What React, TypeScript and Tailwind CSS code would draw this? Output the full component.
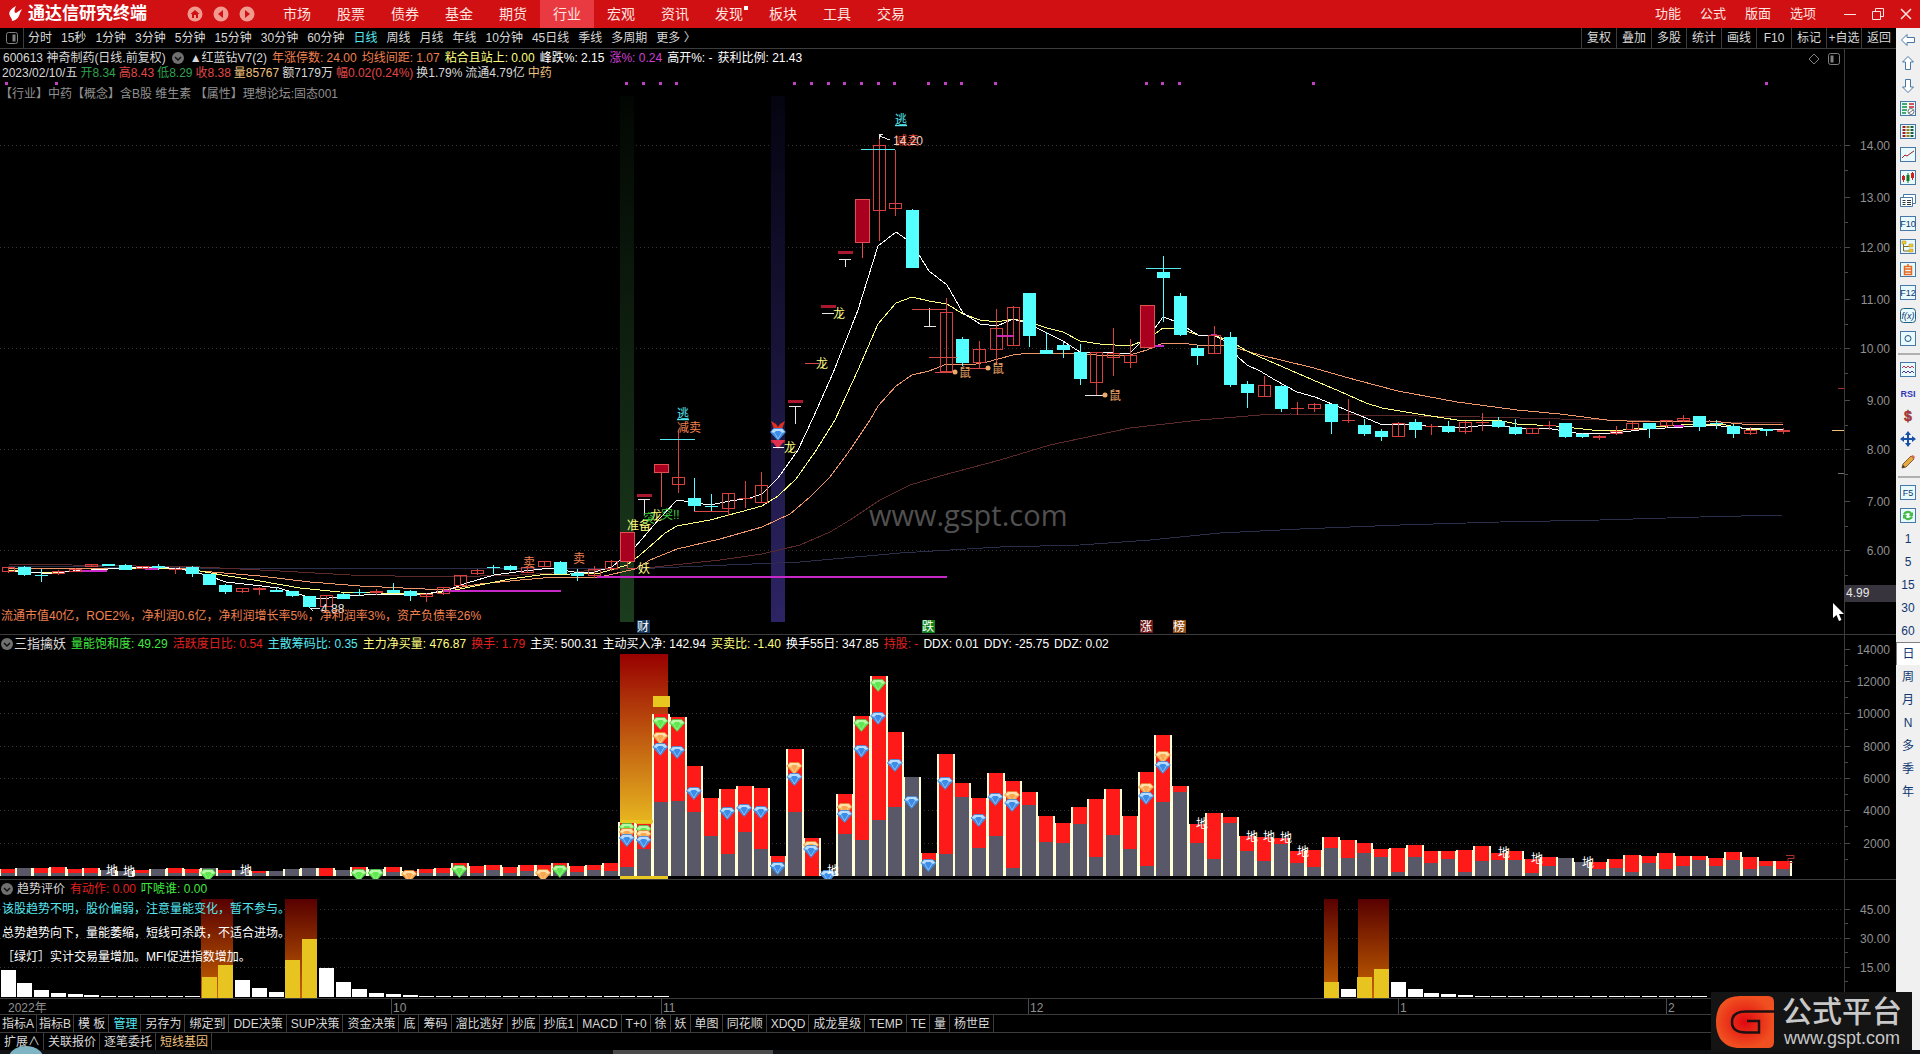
import { useState } from "react";
import type { ReactNode } from "react";

type Kind = "up" | "down" | "limit";
type Candle = [kind: Kind, top: number, bottom: number, high: number, low: number];
type Field = [text: string, color: string];
type GemColor = "g" | "o" | "b";

const STEP = 16.75;
const barX = (i: number) => 7.6 + STEP * i;

const menus = ["市场", "股票", "债券", "基金", "期货", "行业", "宏观", "资讯", "发现", "板块", "工具", "交易"];
const rightMenus = ["功能", "公式", "版面", "选项"];
const periods = ["分时", "15秒", "1分钟", "3分钟", "5分钟", "15分钟", "30分钟", "60分钟", "日线", "周线", "月线", "年线", "10分钟", "45日线", "季线", "多周期", "更多 〉"];
const actions = ["复权", "叠加", "多股", "统计", "画线", "F10", "标记", "+自选", "返回"];
const indicatorTabs = ["指标A", "指标B", "模 板", "管理", "另存为", "绑定到", "DDE决策", "SUP决策", "资金决策", "底", "筹码", "溜比逃好", "抄底", "抄底1", "MACD", "T+0", "徐", "妖", "单图", "同花顺", "XDQD", "成龙星级", "TEMP", "TE", "量", "杨世臣"];
const extraTabs = ["扩展∧", "关联报价", "逐笔委托", "短线基因"];

const priceFields: Field[] = [
  ["年涨停数: 24.00", "text-[#f08050]"],
  ["均线间距: 1.07", "text-[#f08050]"],
  ["粘合且站上: 0.00", "text-[#ffff80]"],
  ["峰跌%: 2.15", "text-white"],
  ["涨%: 0.24", "text-[#d040d0]"],
  ["高开%: -", "text-white"],
  ["获利比例: 21.43", "text-white"],
];

const quoteFields: Field[] = [
  ["2023/02/10/五", "text-[#d8d8d8]"],
  ["开8.34", "text-[#30a050]"],
  ["高8.43", "text-[#e04848]"],
  ["低8.29", "text-[#30a050]"],
  ["收8.38", "text-[#e04848]"],
  ["量85767", "text-[#f0c080]"],
  ["额7179万", "text-[#d8d8d8]"],
  ["幅0.02(0.24%)", "text-[#e04848]"],
  ["换1.79%", "text-[#d8d8d8]"],
  ["流通4.79亿", "text-[#d8d8d8]"],
  ["中药", "text-[#f0c080]"],
];

const volumeFields: Field[] = [
  ["量能饱和度: 49.29", "text-[#40e840]"],
  ["活跃度日比: 0.54", "text-[#e02020]"],
  ["主散筹码比: 0.35", "text-[#54e8f0]"],
  ["主力净买量: 476.87", "text-[#ffff80]"],
  ["换手: 1.79", "text-[#e02020]"],
  ["主买: 500.31", "text-white"],
  ["主动买入净: 142.94", "text-white"],
  ["买卖比: -1.40", "text-[#ffff80]"],
  ["换手55日: 347.85", "text-white"],
  ["持股: -", "text-[#e02020]"],
  ["DDX: 0.01", "text-white"],
  ["DDY: -25.75", "text-white"],
  ["DDZ: 0.02", "text-white"],
];

const trendFields: Field[] = [
  ["有动作: 0.00", "text-[#e02020]"],
  ["吓唬谁: 0.00", "text-[#40e840]"],
];

// kind, body top, body bottom, high, low
const candles: (Candle | null)[] = [
  ["up", 567, 572, 567, 573], ["down", 567, 575, 566, 576], ["down", 575, 576, 569, 582], ["up", 571, 574, 570, 575],
  ["up", 569, 572, 568, 572], ["up", 564, 567, 564, 567], ["down", 564, 566, 564, 566], ["down", 565, 570, 564, 570],
  ["up", 566, 569, 566, 569], ["down", 566, 568, 564, 570], ["up", 569, 570, 568, 574], ["down", 567, 574, 566, 577],
  ["down", 574, 585, 574, 585], ["down", 585, 592, 584, 594], ["up", 588, 592, 588, 593], ["up", 588, 590, 587, 595],
  ["down", 590, 592, 587, 592], ["down", 591, 596, 591, 597], ["down", 596, 607, 596, 608], ["up", 595, 607, 595, 607],
  ["down", 594, 599, 593, 599], ["down", 592, 592, 589, 596], ["up", 591, 593, 589, 595], ["down", 590, 593, 583, 593],
  ["down", 591, 596, 590, 601], ["up", 594, 597, 593, 602], ["up", 587, 594, 587, 595], ["up", 575, 586, 575, 586],
  ["up", 570, 574, 569, 575], ["down", 567, 568, 565, 574], ["down", 566, 570, 565, 571], ["up", 567, 573, 567, 573],
  ["up", 561, 567, 561, 567], ["down", 562, 574, 561, 574], ["down", 573, 576, 569, 581], ["up", 569, 576, 566, 578],
  ["up", 561, 569, 560, 571], ["limit", 532, 562, 532, 568], null, ["limit", 464, 473, 464, 507],
  ["up", 477, 485, 432, 493], ["down", 498, 506, 478, 511], ["down", 506, 507, 494, 511], ["up", 493, 509, 493, 516],
  ["up", 498, 499, 481, 508], ["up", 485, 503, 472, 503], null, null, null, null, null, ["limit", 199, 243, 199, 258],
  ["up", 145, 211, 135, 241], ["up", 203, 209, 150, 216], ["down", 210, 268, 209, 268], null, ["up", 312, 372, 298, 372],
  ["down", 339, 363, 337, 366], ["up", 349, 363, 341, 368], ["up", 328, 350, 309, 365], ["up", 307, 346, 306, 346],
  ["down", 293, 336, 293, 347], ["down", 350, 354, 332, 354], ["down", 345, 350, 342, 358], ["down", 352, 379, 344, 385],
  ["up", 352, 383, 352, 395], ["up", 353, 358, 328, 376], ["up", 355, 363, 339, 368], ["limit", 305, 348, 305, 348],
  ["down", 272, 278, 256, 322], ["down", 296, 335, 293, 336], ["down", 348, 356, 345, 365], ["up", 335, 354, 326, 354],
  ["down", 337, 385, 332, 387], ["down", 384, 393, 381, 408], ["up", 385, 397, 376, 397], ["down", 386, 409, 385, 412],
  ["up", 408, 409, 402, 415], ["up", 404, 409, 403, 412], ["down", 404, 422, 404, 434], ["up", 420, 421, 399, 423],
  ["down", 425, 434, 419, 436], ["down", 431, 437, 429, 441], ["up", 423, 437, 422, 437], ["down", 422, 430, 419, 438],
  ["up", 426, 427, 424, 435], ["down", 426, 432, 421, 433], ["up", 422, 432, 421, 434], ["up", 422, 423, 413, 431],
  ["down", 421, 427, 417, 428], ["down", 427, 434, 419, 435], ["up", 428, 434, 428, 434], ["up", 425, 426, 421, 430],
  ["down", 423, 437, 423, 438], ["down", 434, 437, 433, 438], ["up", 436, 438, 435, 440], ["up", 431, 434, 426, 435],
  ["up", 423, 430, 422, 430], ["down", 423, 429, 423, 438], ["up", 420, 426, 420, 428], ["up", 418, 421, 415, 422],
  ["down", 416, 427, 416, 431], ["down", 423, 424, 420, 429], ["down", 426, 434, 424, 438], ["up", 430, 434, 427, 435],
  ["down", 429, 431, 429, 436], ["up", 430, 432, 428, 434],
];

// total bar height, height of the grey part
const volumes: [number, number][] = [
  [7, 3], [8, 8], [8, 3], [9, 3], [7, 3], [8, 3], [6, 6], [5, 5], [6, 3], [7, 7], [8, 3], [7, 3],
  [8, 8], [6, 3], [6, 6], [5, 3], [5, 5], [7, 7], [8, 8], [8, 0], [6, 6], [9, 6], [7, 7], [9, 4],
  [5, 1], [7, 3], [8, 3], [13, 8], [10, 3], [11, 6], [9, 3], [11, 5], [11, 3], [13, 6], [10, 4], [11, 6],
  [13, 5], [54, 9], [52, 27], [162, 74], [159, 75], [110, 64], [78, 40], [87, 22], [90, 44], [88, 27],
  [20, 14], [127, 64], [38, 0], [5, 5], [82, 42], [160, 36], [200, 56], [144, 69], [99, 99], [23, 16],
  [122, 22], [93, 79], [78, 28], [103, 40], [95, 8], [84, 71], [60, 34], [53, 33], [69, 52], [77, 19],
  [87, 41], [60, 27], [104, 10], [141, 74], [90, 84], [52, 33], [63, 17], [59, 53], [40, 25], [39, 15],
  [38, 32], [25, 13], [26, 9], [39, 28], [36, 18], [33, 23], [27, 19], [28, 4], [31, 19], [25, 13],
  [25, 17], [26, 4], [30, 15], [23, 16], [25, 16], [17, 3], [19, 10], [18, 18], [14, 14], [14, 7],
  [17, 8], [21, 4], [20, 13], [23, 7], [20, 10], [20, 16], [18, 10], [24, 16], [19, 7], [15, 10], [15, 7],
];

const gems: [number, GemColor, number][] = [
  [12, "g", 875], [21, "g", 875], [22, "g", 875], [24, "o", 876], [27, "g", 871], [32, "o", 875], [33, "g", 871],
  [37, "g", 829], [37, "o", 834], [37, "b", 840], [38, "g", 831], [38, "o", 836], [38, "b", 842],
  [39, "g", 723], [39, "o", 738], [39, "b", 749], [40, "g", 725], [40, "b", 752], [41, "b", 793],
  [43, "b", 813], [44, "b", 810], [45, "b", 812], [46, "b", 868], [47, "o", 768], [47, "b", 779],
  [48, "o", 847], [48, "b", 851], [49, "b", 876], [50, "o", 809], [50, "b", 816], [51, "g", 725], [51, "b", 751],
  [52, "g", 685], [52, "b", 718], [53, "b", 765], [54, "b", 802], [55, "b", 865], [56, "b", 783], [58, "b", 820],
  [59, "b", 799], [60, "o", 797], [60, "b", 805], [68, "o", 789], [68, "b", 798], [69, "o", 757], [69, "b", 767],
];

const groundMarks = [[112, 870], [129, 871], [246, 870], [833, 870], [1202, 823], [1252, 836], [1269, 836], [1286, 837], [1303, 851], [1504, 852], [1537, 858], [1588, 862]];
const purpleDots = [6, 56, 626, 643, 660, 676, 794, 811, 828, 844, 861, 878, 894, 928, 945, 961, 995, 1146, 1162, 1179, 1313, 1766];

const averages = [
  { color: "#2b2e48", points: "8,566 200,568 450,568 655,568 800,562 900,553 1000,547 1080,545 1150,540 1220,533 1300,529 1400,525 1500,522 1600,520 1700,517 1783,515" },
  { color: "#5c2a2a", points: "8,564 200,567 280,571 350,575 440,577 520,575 600,570 655,567 720,560 762,554 800,545 830,532 850,520 880,500 910,485 940,476 1000,460 1050,445 1130,428 1200,420 1260,415 1290,414 1356,415 1480,417 1560,419 1650,421 1783,423" },
  { color: "#f09868", points: "8,568 124,569 180,568 200,571 260,576 310,582 360,586 425,589 450,589 480,584 520,580 555,577 600,577 635,569 650,560 677,549 720,539 762,527 790,514 810,497 830,477 850,450 870,420 878,406 896,386 912,375 929,371 947,364 970,365 987,362 1013,355 1029,353 1063,353 1097,355 1130,355 1147,350 1163,343 1180,343 1197,345 1230,346 1260,355 1310,367 1356,380 1398,391 1457,402 1517,410 1560,414 1607,420 1647,422 1710,421 1742,424 1783,424" },
  { color: "#ffff80", points: "8,570 41,573 75,571 124,568 160,568 200,571 222,575 260,581 300,588 340,592 380,593 425,594 450,591 480,585 510,579 540,575 570,574 600,573 627,565 640,555 655,542 665,533 677,526 710,520 740,512 762,506 778,496 796,479 815,452 835,420 858,370 878,324 896,303 912,297 929,301 947,304 963,314 980,320 997,322 1013,319 1029,322 1047,328 1063,332 1080,341 1100,344 1130,346 1140,342 1155,334 1163,328 1177,328 1198,335 1213,335 1230,341 1247,351 1260,357 1290,370 1313,380 1339,391 1366,403 1382,408 1418,414 1457,420 1497,420 1517,424 1556,426 1592,430 1623,430 1655,427 1694,424 1726,425 1746,429 1783,429" },
  { color: "#ffffff", points: "8,571 24,572 41,573 57,573 73,571 92,570 124,568 158,567 180,569 191,571 209,576 226,582 253,585 279,588 295,593 312,598 329,598 346,596 383,594 425,594 448,590 467,583 494,575 524,571 551,568 574,572 594,572 612,567 635,547 660,518 677,500 710,505 730,501 750,498 762,494 778,478 798,450 813,418 833,373 858,310 878,246 896,232 906,239 919,255 929,271 947,285 963,313 980,324 997,326 1013,319 1029,324 1047,333 1063,341 1080,352 1113,353 1130,353 1138,345 1155,328 1163,317 1177,322 1190,330 1198,335 1213,335 1227,342 1238,357 1247,365 1260,371 1275,380 1297,392 1315,397 1339,407 1366,418 1380,424 1402,424 1426,426 1457,428 1489,425 1521,428 1552,429 1576,433 1600,434 1623,432 1647,429 1683,427 1710,425 1742,428 1783,430" },
];

const trendBars: [number, number, boolean?][] = [
  [0, 27], [1, 14], [2, 7], [3, 4], [4, 3], [5, 2],
  [12, 20, true], [13, 32, true], [14, 17], [15, 9], [16, 5], [17, 37, true], [18, 58, true], [19, 29], [20, 15], [21, 8], [22, 4], [23, 3], [24, 2],
  [79, 15, true], [80, 8], [81, 20, true], [82, 28, true], [83, 15], [84, 8], [85, 4], [86, 3], [87, 2],
];
const flatBars = [6, 7, 8, 9, 10, 11, ...range(25, 39), ...range(88, 101)];

function range(from: number, to: number) {
  return Array.from({ length: to - from + 1 }, (_, i) => from + i);
}

const months = [[0, "2022年"], [391, "10"], [661, "11"], [1028, "12"], [1398, "1"], [1666, "2"]] as const;

export default function App() {
  const [menu, setMenu] = useState("行业");
  const [period, setPeriod] = useState("日线");

  return (
    <div className="flex min-h-screen flex-col overflow-hidden bg-black font-['Liberation_Sans','Noto_Sans_CJK_SC',sans-serif] text-xs text-[#d8d8d8]">
      <header className="flex h-7 items-center bg-[#d01012] text-[#ffe4e0]">
        <div className="flex w-[270px] items-center">
          <svg className="ml-2 h-4 w-3.5" viewBox="0 0 14 16" fill="#fff">
            <path d="M8 0C2 3 0 7 2 10c1 2 2 2 2 5 5-1 7-4 8-8l2-4-6 4C6 7 6 4 8 0z" />
          </svg>
          <h1 className="ml-1.5 text-[17px] font-bold leading-7 text-white">通达信研究终端</h1>
          <div className="ml-10 flex gap-[10px]">
            <RoundButton label="主页"><path d="M8 4L3.500 8H5v4h2V9h2v3h2V8h1.500z" /></RoundButton>
            <RoundButton label="后退"><path d="M10 4v8L5 8z" /></RoundButton>
            <RoundButton label="前进"><path d="M6 4v8l5-4z" /></RoundButton>
          </div>
        </div>
        <nav className="flex flex-1">
          {menus.map((m) => (
            <button
              key={m}
              onClick={() => setMenu(m)}
              className={`relative h-7 w-[54px] text-sm ${m === menu ? "bg-[#e83a40]" : ""}`}
            >
              {m}
              {m === "发现" && <span className="absolute right-2 top-1.5 h-1 w-1 bg-white" />}
            </button>
          ))}
        </nav>
        <nav className="mr-7 flex gap-[19px] text-[13px]">
          {rightMenus.map((m) => (
            <button key={m}>{m}</button>
          ))}
        </nav>
        <div className="mr-2 flex items-center gap-4">
          <button aria-label="最小化">
            <svg className="h-3 w-3" stroke="#ffe4e0"><path d="M0 6.500h12" /></svg>
          </button>
          <button aria-label="还原">
            <svg className="h-3 w-3" fill="none" stroke="#ffe4e0"><path d="M.5 3.500h8v8h-8zM3.500 3V.5h8v8H9" /></svg>
          </button>
          <button aria-label="关闭">
            <svg className="h-3 w-3" fill="none" stroke="#ffe4e0" strokeWidth="1.500"><path d="M1 1l10 10M11 1L1 11" /></svg>
          </button>
        </div>
      </header>

      <div className="flex flex-1">
        <main className="min-w-0 flex-1">
          <div className="flex h-[21px] items-center border-b border-[#3c3c3c]">
            <div className="mr-1 flex h-5 w-6 items-center justify-center border-r border-[#3c3c3c]">
              <PaneIcon flip />
            </div>
            <nav className="flex flex-1 gap-[9px] whitespace-nowrap">
              {periods.map((p) => (
                <button key={p} onClick={() => setPeriod(p)} className={p === period ? "text-[#54e8f0]" : ""}>
                  {p}
                </button>
              ))}
            </nav>
            {actions.map((a) => (
              <button key={a} className="h-5 w-[35px] whitespace-nowrap border-l border-[#3c3c3c] text-center">
                {a}
              </button>
            ))}
          </div>
          <PricePanel />
          <VolumePanel />
          <TrendPanel />
          <TimeAxis />
          <TabRow tabs={indicatorTabs} active="管理" activeColor="text-[#54e8f0]" />
          <TabRow tabs={extraTabs} active="短线基因" activeColor="text-[#f0c080]" />
        </main>
        <SideBar />
      </div>

      <footer className="relative h-1 bg-[#101214]">
        <div className="ml-[613px] h-1 w-40 bg-[#4a4a4a]" />
        <svg className="absolute bottom-0 left-2 h-2 w-9">
          <ellipse cx="18" cy="14" rx="18" ry="14" fill="#7fb4c4" />
        </svg>
        <Brand />
      </footer>
    </div>
  );
}

function RoundButton({ label, children }: { label: string; children: ReactNode }) {
  return (
    <button aria-label={label}>
      <svg className="h-4 w-4" viewBox="0 0 16 16" fill="#d01012">
        <circle cx="8" cy="8" r="7.500" fill="#f09a90" />
        {children}
      </svg>
    </button>
  );
}

function PaneIcon({ flip = false }: { flip?: boolean }) {
  return (
    <svg className="h-3 w-3" viewBox="0 0 12 12" fill="none" stroke="#808080">
      <rect x="0.500" y="0.500" width="11" height="11" rx="2" />
      <rect x={flip ? 7 : 3} y="3" width="2" height="6" fill="#808080" />
    </svg>
  );
}

function Chevron() {
  return (
    <svg className="h-3.5 w-3.5 shrink-0" viewBox="0 0 14 14" fill="none">
      <circle cx="7" cy="7" r="6" fill="#707070" />
      <path d="M4 6l3 3 3-3" stroke="#101010" strokeWidth="1.500" />
    </svg>
  );
}

function Fields({ items }: { items: Field[] }) {
  return (
    <>
      {items.map(([text, color]) => (
        <span key={text} className={color}>{text}</span>
      ))}
    </>
  );
}

function Grid({ ys }: { ys: number[] }) {
  return (
    <>
      {ys.map((y) => (
        <line key={y} x1="0" x2="100%" y1={y + 0.5} y2={y + 0.5} stroke="#343434" strokeDasharray="1 3" />
      ))}
    </>
  );
}

function Axis({ ticks, top, minor, children }: { ticks: [number, string][]; top: number; minor: number; children?: ReactNode }) {
  return (
    <svg className="h-full w-[52px] shrink-0 border-l border-[#3c3c3c]" fontSize="12" fill="#909090">
      <g transform={`translate(0 ${-top})`}>
        {ticks.map(([y, label]) => (
          <g key={label}>
            <path d={`M0 ${y + 0.5}h5M0 ${y + minor + 0.5}h3`} stroke="#4a4a4a" />
            <text x="45" y={y + 5} textAnchor="end">{label}</text>
          </g>
        ))}
        {children}
      </g>
    </svg>
  );
}

function CandleShape({ candle, x }: { candle: Candle; x: number }) {
  const [kind, top, bottom, high, low] = candle;
  const color = kind === "down" ? "#54ffff" : kind === "up" ? "#d84040" : "#e05050";
  const cx = Math.round(x) + 0.5;
  const half = kind === "limit" ? 7 : 6;
  return (
    <g stroke={color} fill={kind === "down" ? "#54ffff" : kind === "limit" ? "#aa0020" : "#000"}>
      <path d={`M${cx} ${high}V${low}`} />
      <rect x={cx - half} y={top + 0.5} width={half * 2} height={Math.max(bottom - top - 1, 0.01)} fillOpacity={kind === "up" ? 0 : 1} />
    </g>
  );
}

function Badge({ x, fill, text }: { x: number; fill: string; text: string }) {
  return (
    <g>
      <rect x={x} y="620" width="13" height="13" fill={fill} />
      <text x={x} y="631" fill="#fff">{text}</text>
    </g>
  );
}

function PricePanel() {
  return (
    <section className="flex h-[586px] border-b border-[#3c3c3c]">
      <div className="relative min-w-0 flex-1">
        <svg className="h-full w-full" fontSize="12">
          <defs>
            <linearGradient id="greenBand" x1="0" y1="0" x2="0" y2="1">
              <stop offset="0" stopColor="#020602" />
              <stop offset="1" stopColor="#1c3c1e" />
            </linearGradient>
            <linearGradient id="blueBand" x1="0" y1="0" x2="0" y2="1">
              <stop offset="0" stopColor="#040410" />
              <stop offset="1" stopColor="#2c2464" />
            </linearGradient>
          </defs>
          <g transform="translate(0 -49)">
            <Grid ys={[145, 247, 348, 449, 550]} />
            <rect x="620" y="96" width="14" height="526" fill="url(#greenBand)" />
            <rect x="771" y="96" width="14" height="526" fill="url(#blueBand)" />
            {purpleDots.map((x) => (
              <rect key={x} x={x - 1} y="82" width="3" height="3" fill="#c040c0" />
            ))}
            <g fill="none" shapeRendering="crispEdges">
              {averages.map((a) => (
                <polyline key={a.color} points={a.points} stroke={a.color} />
              ))}
            </g>
            <g stroke="#c828c8" strokeWidth="2">
              <path d="M597 577H947M444 591H561M80 571h27M145 569h13M997 336h17M1148 346h16M1211 335h6M1674 426h10" />
            </g>
            <g shapeRendering="crispEdges">
              {candles.map((c, i) => c && <CandleShape key={i} candle={c} x={barX(i)} />)}
            </g>
            <g stroke="#aa1830" strokeWidth="3">
              <path d="M637 495.500h15M788 401.500h15M821 306.500h15M838 252.500h15M771 441.500h14" />
            </g>
            <g fill="none" stroke="#e8e8e8" shapeRendering="crispEdges">
              <path d="M638 499.500h12m-6 0v15M789 406.500h12m-6 0v17M822 313.500h12M839 259.500h12m-6 0v7M929.500 308v18m-6 .5h12M1085 395.500h18" />
              <path d="M320 608h-10l3 3M879 135l3 2 8 3M879 139v-5h4" />
            </g>
            <path d="M805 363.500h14M912 309.500h35M929 357.500h28M935 372.500h17M970 368.500h18M694 511.500h35M628 568.500h8" stroke="#d84848" />
            <path d="M660 439.500h35M861 149.500h34M1146 268.500h35" stroke="#54e8f0" />

            <g fill="#54e8f0" textDecoration="underline">
              <text x="677" y="418">逃</text>
              <text x="895" y="124">逃</text>
            </g>
            <g fill="#f08050">
              <text x="677" y="432">减卖</text>
              <text x="523" y="567">卖</text>
              <text x="573" y="563">卖</text>
              <text x="895" y="145" fill="#e04030">减卖</text>
            </g>
            <g fill="#ffff80">
              <text x="627" y="530">准备</text>
              <text x="638" y="573">妖</text>
              <text x="784" y="452">龙</text>
              <text x="816" y="368">龙</text>
              <text x="833" y="318">龙</text>
              <text x="650" y="520">龙</text>
            </g>
            <text x="643" y="523" fill="#40c840">突</text>
            <text x="661" y="519" fill="#40c840">突!!</text>
            {[[955, 372], [988, 368], [1105, 395]].map(([x, y]) => (
              <g key={x} fill="#f0a868">
                <circle cx={x} cy={y} r="2.500" />
                <text x={x + 4} y={y + 5}>鼠</text>
              </g>
            ))}
            <text x="321" y="613" fill="#e8e8e8">4.88</text>
            <text x="893" y="145" fill="#f0d0c0">14.20</text>
            <g>
              <path d="M771 421l5 3 2 3 2-3 5-3-3 8h-8z" fill="#e03020" />
              <Gem x={778} y={434} color="b" />
              <path d="M771 440h14l-7 9z" fill="#e03050" />
              <path d="M773 447.500h11" stroke="#fff" />
            </g>
            <Badge x={637} fill="#103860" text="财" />
            <Badge x={922} fill="#108018" text="跌" />
            <Badge x={1140} fill="#701818" text="涨" />
            <Badge x={1173} fill="#904c14" text="榜" />
            <text x="1" y="620" fill="#f08050">流通市值40亿，ROE2%，净利润0.6亿，净利润增长率5%，净利润率3%，资产负债率26%</text>
            <text x="869" y="526" fontSize="29" fill="#505050" fontFamily="Open Sans">www.gspt.com</text>
          </g>
        </svg>
        <div className="absolute inset-x-0 top-0 whitespace-nowrap">
          <div className="mt-px flex h-4 items-center gap-[5px] pl-[3px] leading-4">
            <span>600613 神奇制药(日线.前复权)</span>
            <Chevron />
            <span>▲红蓝钻V7(2)</span>
            <Fields items={priceFields} />
          </div>
          <div className="flex gap-[3px] pl-0.5 leading-[14px]">
            <Fields items={quoteFields} />
          </div>
          <p className="mt-1.5 leading-4 text-[#909090]">【行业】中药【概念】含B股 维生素 【属性】理想论坛:固态001</p>
        </div>
        <div className="absolute right-1 top-1 flex items-center gap-2">
          <svg className="h-3 w-3" fill="none" stroke="#808080"><path d="M6 1l5 5-5 5-5-5z" /></svg>
          <PaneIcon />
        </div>
        <div className="absolute right-0 top-[270px] h-[160px] w-4">
          <svg className="h-full w-full">
            <path d="M10 69.500h6" stroke="#a03030" />
            <path d="M10 154.500h6" stroke="#707070" />
            <path d="M4 111.500h12" stroke="#f0c080" />
          </svg>
        </div>
        <svg className="absolute bottom-3 right-0 h-5 w-3" viewBox="0 0 12 20">
          <path d="M1 1v15l3.500-3 2.500 6 2.500-1-2.500-6h5z" fill="#fff" />
        </svg>
      </div>
      <Axis
        top={49}
        minor={25}
        ticks={[[145, "14.00"], [197, "13.00"], [247, "12.00"], [299, "11.00"], [348, "10.00"], [400, "9.00"], [449, "8.00"], [501, "7.00"], [550, "6.00"]]}
      >
        <rect x="0" y="585" width="52" height="17" fill="#38343e" />
        <text x="1" y="597" fill="#e8e8e8">4.99</text>
      </Axis>
    </section>
  );
}

const gemPalette = {
  g: { edge: "#48c848", top: "#b8f8a8", body: "#60e850" },
  o: { edge: "#e08830", top: "#ffe0a8", body: "#f8a850" },
  b: { edge: "#4090e0", top: "#b8dcff", body: "#3c8ce8" },
};

function Gem({ x, y, color }: { x: number; y: number; color: GemColor }) {
  const c = gemPalette[color];
  return (
    <g transform={`translate(${x} ${y})`}>
      <path d="M-7.500 -2L-4.500 -5.500H4.500L7.500 -2L0 6.500Z" fill={c.body} stroke={c.edge} strokeWidth="0.800" />
      <path d="M-7 -2L-4.300 -5H4.300L7 -2L4 -1L2 -3H-2L-4 -1Z" fill={c.top} />
      <path d="M-3.500 -1L0 5L3.500 -1" fill="none" stroke={c.top} strokeWidth="0.600" />
    </g>
  );
}

function VolumePanel() {
  const base = 876;
  return (
    <section className="flex h-[245px] border-b border-[#3c3c3c]">
      <div className="relative min-w-0 flex-1">
        <svg className="h-full w-full" fontSize="12">
          <defs>
            <linearGradient id="heat" x1="0" y1="0" x2="0" y2="1">
              <stop offset="0" stopColor="#980000" />
              <stop offset="1" stopColor="#e8b820" />
            </linearGradient>
          </defs>
          <g transform="translate(0 -635)">
            <Grid ys={[681, 713, 746, 778, 810, 843]} />
            <rect x="620" y="654" width="48" height="170" fill="url(#heat)" />
            <g shapeRendering="crispEdges">
              {volumes.map(([h, grey], i) => {
                const x = Math.round(barX(i));
                return (
                  <g key={i}>
                    <rect x={x - 9} y={base - h} width="18" height={h} fill="#ffffd8" />
                    <rect x={x - 7} y={base - h} width="14" height={h} fill="#ff1a1a" />
                    <rect x={x - 7} y={base - grey} width="14" height={grey} fill="#585868" />
                  </g>
                );
              })}
            </g>
            <path d="M653 696h17v11h-17zM620 820h33v3h-33zM620 876h48v3h-48z" fill="#e8c820" />
            {gems.map(([i, color, y]) => (
              <Gem key={`${i}${color}`} x={barX(i) - 0.5} y={y} color={color} />
            ))}
            <g fill="#fff">
              {groundMarks.map(([x, y]) => (
                <text key={x} x={x - 6} y={y + 5}>地</text>
              ))}
            </g>
            <path d="M1786 855.500h8v3h-6v4h5M1790 865l-3 6" stroke="#b03030" fill="none" />
          </g>
        </svg>
        <div className="absolute inset-x-0 top-0 flex h-[17px] items-center gap-[5px] whitespace-nowrap">
          <div className="flex items-center">
            <Chevron />
            <span className="text-[13px]">三指擒妖</span>
          </div>
          <Fields items={volumeFields} />
        </div>
      </div>
      <Axis
        top={635}
        minor={16}
        ticks={[[649, "14000"], [681, "12000"], [713, "10000"], [746, "8000"], [778, "6000"], [810, "4000"], [843, "2000"]]}
      />
    </section>
  );
}

function TrendPanel() {
  const base = 997;
  return (
    <section className="flex h-[119px] border-b border-[#3c3c3c]">
      <div className="relative min-w-0 flex-1">
        <svg className="h-full w-full" shapeRendering="crispEdges">
          <defs>
            <linearGradient id="flame" x1="0" y1="0" x2="0" y2="1">
              <stop offset="0" stopColor="#580000" />
              <stop offset="1" stopColor="#c86400" />
            </linearGradient>
          </defs>
          <g transform="translate(0 -880)">
            <Grid ys={[909, 938, 967]} />
            {[[201, 32], [285, 32], [1324, 14], [1358, 31]].map(([x, w]) => (
              <rect key={x} x={x} y="899" width={w} height="99" fill="url(#flame)" />
            ))}
            {trendBars.map(([i, h, hot]) => (
              <rect key={i} x={barX(i) - 7} y={base - h} width="15" height={hot ? h + 1 : h} fill={hot ? "#e8c420" : "#fff"} />
            ))}
            {flatBars.map((i) => (
              <rect key={i} x={barX(i) - 7} y={base - 1} width="15" height="1" fill="#fff" />
            ))}
          </g>
        </svg>
        <div className="absolute left-0 top-0 whitespace-nowrap">
          <div className="flex h-[17px] items-center gap-[5px]">
            <div className="flex items-center gap-[3px]">
              <Chevron />
              <span>趋势评价</span>
            </div>
            <Fields items={trendFields} />
          </div>
          <div className="flex flex-col gap-2 pl-0.5 pt-1 leading-4 text-white">
            <p className="text-[#54e8f0]">该股趋势不明，股价偏弱，注意量能变化，暂不参与。</p>
            <p>总势趋势向下，量能萎缩，短线可杀跌，不适合进场。</p>
            <p>［绿灯］实计交易量增加。MFI促进指数增加。</p>
          </div>
        </div>
      </div>
      <Axis top={880} minor={14} ticks={[[909, "45.00"], [938, "30.00"], [967, "15.00"]]} />
    </section>
  );
}

function TimeAxis() {
  return (
    <svg className="block h-[15px] w-full" fontSize="12" fill="#909090">
      {months.map(([x, label]) => (
        <g key={label}>
          {x > 0 && <path d={`M${x + 0.5} 0v15`} stroke="#4a4a4a" />}
          <text x={x > 0 ? x + 2 : 8} y="13">{label}</text>
        </g>
      ))}
    </svg>
  );
}

function TabRow({ tabs, active, activeColor }: { tabs: string[]; active: string; activeColor: string }) {
  return (
    <div className="flex h-[18px] border-t border-[#3c3c3c]">
      {tabs.map((t) => (
        <button
          key={t}
          className={`whitespace-nowrap border-r border-[#3c3c3c] leading-4 ${t.startsWith("指标") ? "px-0.5" : "pl-1 pr-[3px]"} ${t === active ? activeColor : ""}`}
        >
          {t}
        </button>
      ))}
    </div>
  );
}

function Boxed({ children }: { children: ReactNode }) {
  return (
    <>
      <rect x="0.500" y="0.500" width="15" height="14" fill="#e8fafc" stroke="#4878a8" />
      {children}
    </>
  );
}

function Label({ children }: { children: ReactNode }) {
  return <text x="8" y="11" fontSize="9" textAnchor="middle" fill="#103870">{children}</text>;
}

const blockArrow = "M1.500 8L7 2.500V5.500H14.500V10.500H7V13.500Z";

const tools: [string, ReactNode][] = [
  ["返回", <path d={blockArrow} fill="#fff" stroke="#4878a8" />],
  ["上翻", <path d={blockArrow} fill="#fff" stroke="#4878a8" transform="rotate(90 8 8)" />],
  ["下翻", <path d={blockArrow} fill="#fff" stroke="#4878a8" transform="rotate(-90 8 8)" />],
  ["报价", <Boxed><path d="M2 3h5M2 6h5M2 9h5M2 12h4" stroke="#109040" strokeWidth="1.500" /><path d="M9 3h5M9 6h5" stroke="#d02020" strokeWidth="1.500" /><circle cx="11" cy="10.500" r="3" fill="#fff" stroke="#707070" /><path d="M9 12l4-3" stroke="#707070" /></Boxed>],
  ["列表", <Boxed><path d="M4 2v12" stroke="#a02020" strokeWidth="3" strokeDasharray="2 1" /><path d="M8 2v12" stroke="#908020" strokeWidth="3" strokeDasharray="2 1" /><path d="M12 2v12" stroke="#206040" strokeWidth="3" strokeDasharray="2 1" /></Boxed>],
  ["走势", <Boxed><path d="M2 11l3-3 2 1 4-3 3-2" fill="none" stroke="#a02020" /></Boxed>],
  ["K线", <Boxed><path d="M3.500 5v7M12.500 2v8" stroke="#d02020" /><path d="M2 6h3v4H2zM11 3h3v5h-3z" fill="#d02020" /><path d="M8 3v10" stroke="#107820" /><path d="M6.500 5h3v6h-3z" fill="#107820" /></Boxed>],
  ["资料", <g fill="#fff" stroke="#4878a8"><path d="M3.500 1.500h12v9h-12z" /><path d="M.5 4.500h12v9H.5z" /><path d="M2.500 7.500h3m1.500 0h4m-8.500 2h3m1.500 0h4m-8.500 2h3m1.500 0h4" stroke="#303840" /></g>],
  ["F10", <Boxed><Label>F10</Label></Boxed>],
  ["树", <Boxed><path d="M3.500 3v9h6M3.500 7.500h6" fill="none" stroke="#806820" /><path d="M2 2h4v3H2zM9 5h4v3H9zM9 10h4v3H9z" fill="#f0c830" stroke="#b09030" strokeWidth="0.500" /></Boxed>],
  ["自选", <Boxed><path d="M4.500 4.500h7v8h-7zM8 2v2M4 7h8M4 10h8" fill="none" stroke="#e86820" strokeWidth="1.500" /></Boxed>],
  ["F12", <Boxed><Label>F12</Label></Boxed>],
  ["公式", <><rect x="0.500" y="0.500" width="15" height="14" rx="3" fill="#e8fafc" stroke="#206080" /><text x="8" y="11" fontSize="9" fontStyle="italic" textAnchor="middle" fill="#103870">f(x)</text></>],
  ["圈", <Boxed><circle cx="8" cy="7.500" r="3" fill="none" stroke="#205080" /></Boxed>],
  ["-", null],
  ["波动", <Boxed><path d="M2 6l2-2 2 2 2-2 2 2 2-2 2 2" fill="none" stroke="#c03050" /><path d="M2 11l2-2 2 2 2-2 2 2 2-2 2 2" fill="none" stroke="#503090" /></Boxed>],
  ["RSI", <text x="8" y="12" fontSize="9" fontWeight="bold" textAnchor="middle" fill="#3038b8">RSI</text>],
  ["资金", <text x="8" y="13" fontSize="14" fontWeight="bold" textAnchor="middle" fill="#c03838" stroke="#803030" strokeWidth="0.500">$</text>],
  ["移动", <path d="M8 0l3 4H9v3h3V5l4 3-4 3V9H9v3h2l-3 4-3-4h2V9H4v2L0 8l4-3v2h3V4H5z" fill="#1850a8" />],
  ["画笔", <g><path d="M2 14l1-4 8-8 3 3-8 8z" fill="#e8a840" stroke="#806030" /><path d="M11 2l2-1 2 2-1 2z" fill="#e06858" /><path d="M2 14l1-3 2 2z" fill="#303030" /></g>],
  ["--", null],
  ["F5", <Boxed><Label>F5</Label></Boxed>],
  ["刷新", <Boxed><path d="M3 6c2-4 7-4 9-1l1-1v4H9l1-2C9 4 6 5 5 7zM13 9c-2 4-7 4-9 1l-1 1V7h4l-1 2c1 2 4 1 5-1z" fill="#48b848" /></Boxed>],
];

function SideBar() {
  const [scale, setScale] = useState("日");
  return (
    <aside className="flex w-6 shrink-0 flex-col bg-[#f0f0f0] text-[#103870]">
      {tools.map(([name, icon]) =>
        icon ? (
          <button key={name} aria-label={name} className="flex h-[23px] items-center justify-center">
            <svg className="h-4 w-4" viewBox="0 0 16 16">{icon}</svg>
          </button>
        ) : (
          <hr key={name} className="my-[3px] ml-0.5 border-t-2 border-[#b0b0b0]" />
        )
      )}
      {["1", "5", "15", "30", "60", "日", "周", "月", "N", "多", "季", "年"].map((s) => (
        <button
          key={s}
          onClick={() => setScale(s)}
          className={`h-[23px] leading-[22px] ${s === scale ? "border-l border-t border-[#808080] bg-white" : ""}`}
        >
          {s}
        </button>
      ))}
    </aside>
  );
}

function Brand() {
  return (
    <div className="absolute bottom-0.5 right-2 flex h-[60px] w-[201px] items-center gap-2 bg-[#141414] pl-[5px]">
      <svg className="h-[52px] w-[58px]" viewBox="0 0 58 52">
        <defs>
          <radialGradient id="brand">
            <stop offset="0" stopColor="#e00810" />
            <stop offset="1" stopColor="#f05020" />
          </radialGradient>
        </defs>
        <path d="M24 0H52q6 0 6 6V46q0 6-6 6H24C8 52 0 42 0 26S8 0 24 0z" fill="url(#brand)" />
        <path d="M58 15.500H30C20 15.500 16 19 16 26s4 10.500 14 10.500H43V25H31" fill="none" stroke="#1c1010" strokeWidth="2.500" />
      </svg>
      <div className="text-center text-[#c8c8c8]">
        <div className="text-[30px] font-medium leading-8">公式平台</div>
        <div className="text-lg leading-5">www.gspt.com</div>
      </div>
    </div>
  );
}
